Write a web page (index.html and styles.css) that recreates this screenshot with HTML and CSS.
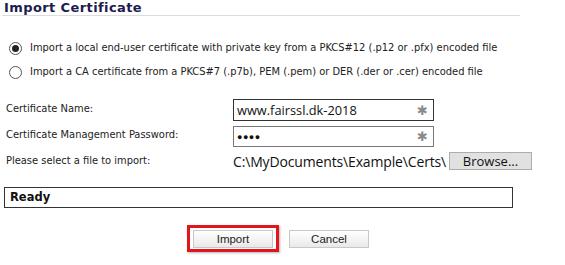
FILE: index.html
```html
<!DOCTYPE html>
<html>
<head>
<meta charset="utf-8">
<link rel="stylesheet" href="styles.css">
</head>
<body>
<div class="page">
  <div class="title">Import Certificate</div>
  <div class="options">
    <label class="opt"><span class="radio checked"></span><span>Import a local end-user certificate with private key from a PKCS#12 (.p12 or .pfx) encoded file</span></label>
    <label class="opt"><span class="radio"></span><span>Import a CA certificate from a PKCS#7 (.p7b), PEM (.pem) or DER (.der or .cer) encoded file</span></label>
  </div>
  <div class="form">
    <div class="label l1">Certificate Name:</div>
    <div class="field f1"><span class="val">www.fairssl.dk-2018</span><span class="star">&#x2731;</span></div>
    <div class="label l2">Certificate Management Password:</div>
    <div class="field f2"><span class="val dots">&#x25CF;&#x25CF;&#x25CF;&#x25CF;</span><span class="star">&#x2731;</span></div>
    <div class="label l3">Please select a file to import:</div>
    <div class="file"><span class="path">C:\MyDocuments\Example\Certs\</span><span class="browse">Browse...</span></div>
  </div>
  <div class="status">Ready</div>
  <div class="buttons">
    <div class="highlight"><div class="btn">Import</div></div>
    <div class="btn">Cancel</div>
  </div>
</div>
</body>
</html>
```
FILE: styles.css
```css
html, body { margin: 0; padding: 0; background: #fff; }
body { width: 565px; height: 265px; overflow: hidden; }
.page { font-family: Tahoma, "DejaVu Sans Condensed", "Liberation Sans", sans-serif; color: #222; }
.title {
  margin: 0 45px 0 2px;
  padding: 1px 0 1px 2px;
  font-family: "DejaVu Sans", sans-serif;
  font-weight: bold;
  font-size: 13px;
  letter-spacing: 0.4px;
  color: #1c1c4f;
  border-bottom: 1px solid #dcdcdc;
  line-height: 13px;
}
.options { display: flex; flex-direction: column; gap: 6px; padding: 23px 0 0 9px; }
.opt { display: flex; align-items: center; gap: 8px; font-size: 11px; line-height: 18px; color: #222; }
.radio {
  width: 11px; height: 11px; border: 1px solid #555; border-radius: 50%;
  display: flex; align-items: center; justify-content: center; background: #fff;
}
.radio.checked::after { content: ""; width: 7px; height: 7px; border-radius: 50%; background: #222; }
.form {
  display: grid;
  grid-template-columns: 227px auto;
  grid-template-rows: 22px 21px 18px;
  row-gap: 5px;
  margin: 18px 0 0 6px;
  align-items: center;
  justify-content: start;
}
.label { font-size: 11px; color: #222; margin-top: -4px; }
.l3 { margin-top: -2px; }
.field {
  width: 201px; height: 22px; box-sizing: border-box;
  border: 1px solid #333; display: flex; align-items: center; justify-content: space-between;
  padding: 0 5px 0 3px;
  font-family: "Open Sans", "Noto Sans", sans-serif; font-size: 12.8px; color: #111;
}
.f2 { height: 21px; border-color: #777; }
.dots { font-size: 9px; letter-spacing: 0.5px; }
.star { color: #8a8a8a; font-size: 13px; font-family: "DejaVu Sans", sans-serif; }
.file { display: flex; align-items: center; height: 18px; font-family: "Open Sans", "Noto Sans", sans-serif; font-size: 14px; color: #111; }
.path { width: 216px; white-space: nowrap; overflow: hidden; letter-spacing: -0.15px; }
.browse {
  width: 83px; height: 18px; box-sizing: border-box; background: #e1e1e1; border: 1px solid #adadad;
  display: flex; align-items: center; justify-content: center; font-size: 13px; line-height: 1;
}
.status {
  margin: 17px 52px 0 4px; height: 21px; box-sizing: border-box;
  border: 1px solid #333; padding: 0 0 0 5px;
  font-family: "DejaVu Sans", sans-serif; font-weight: bold; font-size: 11.5px; line-height: 19px; color: #111;
}
.buttons { display: flex; align-items: center; justify-content: center; gap: 10px; margin: 17px 0 0 -9px; }
.highlight { border: 3px solid #e0161b; padding: 0 3px; height: 21px; display: flex; align-items: center; box-shadow: 1px 1px 2px rgba(0,0,0,0.3); }
.btn {
  width: 80px; height: 18px; box-sizing: border-box;
  border: 1px solid #c8c8c8; background: linear-gradient(#ffffff, #e9e9e9);
  font-family: "Liberation Sans", Arial, sans-serif; font-size: 11.5px; color: #222;
  display: flex; align-items: center; justify-content: center;
}
```
